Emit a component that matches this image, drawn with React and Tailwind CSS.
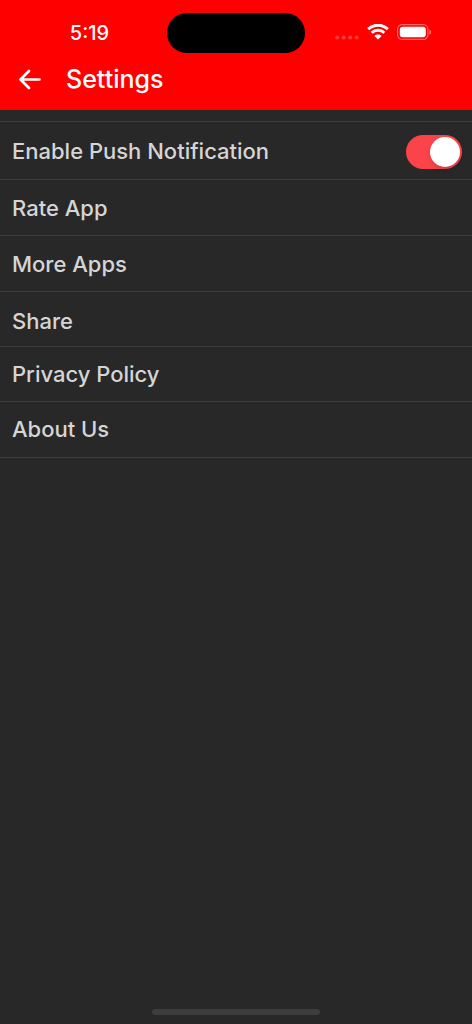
import { useState } from "react";

const links = [
  { label: "Rate App", height: "h-14 pt-0.5" },
  { label: "More Apps", height: "h-14 pt-0.5" },
  { label: "Share", height: "h-[55px] pt-1" },
  { label: "Privacy Policy", height: "h-[55px]" },
  { label: "About Us", height: "h-14" },
];

function WifiIcon() {
  return (
    <svg className="w-[22px] h-4" viewBox="0 0 22 16" fill="none" stroke="white" aria-hidden="true">
      <path d="M1.2 5.2C6.7 -.1 15.3 -.1 20.8 5.2" strokeWidth="3" />
      <path d="M4.6 8.8C8.2 5.4 13.8 5.4 17.4 8.8" strokeWidth="2.9" />
      <path d="M11 15.6L7.4 12C9.4 10.1 12.6 10.1 14.6 12Z" fill="white" stroke="none" />
    </svg>
  );
}

function BatteryIcon() {
  return (
    <svg className="w-[35px] h-4" viewBox="0 0 35 16" aria-hidden="true">
      <rect x="0.6" y="0.6" width="30.3" height="14.8" rx="4.6" fill="none" stroke="white" strokeOpacity="0.4" strokeWidth="1.2" />
      <rect x="2.8" y="2.8" width="26" height="10.4" rx="3" fill="white" />
      <path d="M32.4 5.4C34.8 6.2 34.8 9.8 32.4 10.6Z" fill="white" fillOpacity="0.45" />
    </svg>
  );
}

function StatusBar() {
  return (
    <div className="grid grid-cols-[1fr_auto_1fr] h-10 items-center">
      <span className="pl-3 text-center text-xl font-medium">5:19</span>
      <div className="w-[138px] h-10 rounded-full bg-black" />
      <div className="flex items-center justify-end gap-2 pr-10 pb-0.5">
        <svg className="w-6 h-4" viewBox="0 0 24 16" fill="white" fillOpacity="0.22" aria-hidden="true">
          <circle cx="2.2" cy="13.5" r="2.1" />
          <circle cx="8.7" cy="13.5" r="2.1" />
          <circle cx="15.2" cy="13.5" r="2.1" />
          <circle cx="21.7" cy="13.5" r="2.1" />
        </svg>
        <WifiIcon />
        <BatteryIcon />
      </div>
    </div>
  );
}

export default function App() {
  const [push, setPush] = useState(true);

  return (
    <div className="min-h-screen flex flex-col bg-[#282828] font-['Inter',sans-serif]">
      {/* Header */}
      <header className="bg-[#ff0000] text-white pt-[13px] pb-[3px]">
        <StatusBar />
        <div className="flex items-center gap-6 h-[54px] px-[18px]">
          <button type="button" aria-label="Back">
            <svg className="w-6 h-6" viewBox="0 0 24 24" fill="none" stroke="white" strokeWidth="2.7" strokeLinecap="round" strokeLinejoin="round" aria-hidden="true">
              <path d="M21.5 11.5H2.5M11 3L2.5 11.5L11 20" />
            </svg>
          </button>
          <h1 className="text-[25px] font-medium">Settings</h1>
        </div>
      </header>

      {/* Options */}
      <main className="flex-1 pt-[11px] text-[#d5d5d5] text-[22px] font-medium">
        <div className="flex items-center justify-between h-[59px] pt-0.5 pl-3 pr-[10px] border-y border-[#3c3c3c]">
          <label htmlFor="push">Enable Push Notification</label>
          <input
            id="push"
            type="checkbox"
            role="switch"
            checked={push}
            onChange={(e) => setPush(e.target.checked)}
            className="appearance-none flex items-center w-14 h-[34px] px-0.5 rounded-full bg-[#555555] checked:bg-[#fb444a] checked:justify-end before:w-[30px] before:h-[30px] before:rounded-full before:bg-white before:shadow-md"
          />
        </div>
        <nav>
          {links.map((link) => (
            <a key={link.label} href="#" className={`flex items-center px-3 border-b border-[#3c3c3c] ${link.height}`}>
              {link.label}
            </a>
          ))}
        </nav>
      </main>

      {/* Home indicator */}
      <footer className="flex justify-center pb-[9px]">
        <div className="w-[168px] h-1.5 rounded-full bg-[#3d3d3d]" />
      </footer>
    </div>
  );
}
